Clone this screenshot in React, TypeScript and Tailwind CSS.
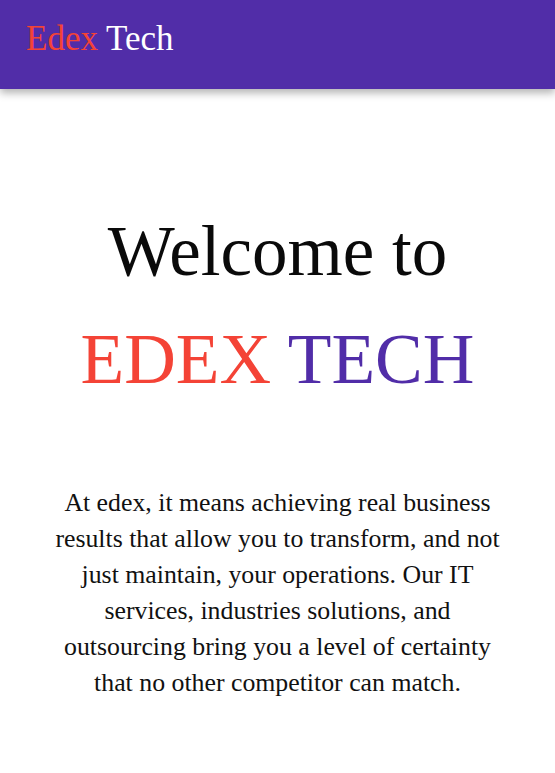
import React from "react";

const App = () => {
  return (
    <div className="min-h-[773px] bg-white font-['Liberation_Serif',serif]">
      <header className="flex h-[89px] items-center bg-[#512da8] px-[26px] shadow-[0_4px_8px_rgba(0,0,0,0.3)]">
        <h1 className="-mt-[12px] text-[35px] leading-none">
          <span className="text-[#f44336]">Edex</span>{" "}
          <span className="text-white">Tech</span>
        </h1>
      </header>
      <section className="flex flex-col items-center pt-[108px] text-center">
        <h2 className="text-[71px] leading-[108px] text-[#0a0a0a]">Welcome to</h2>
        <h2 className="text-[71.5px] leading-[108px]">
          <span className="text-[#f44336]">EDEX</span>{" "}
          <span className="text-[#512da8]">TECH</span>
        </h2>
      </section>
      <p className="mx-auto mt-[72px] max-w-[460px] px-1 text-center text-[25.8px] leading-[36px] text-[#111]">
        At edex, it means achieving real business results that allow you to
        transform, and not just maintain, your operations. Our IT services,
        industries solutions, and outsourcing bring you a level of certainty
        that no other competitor can match.
      </p>
    </div>
  );
};

export default App;
